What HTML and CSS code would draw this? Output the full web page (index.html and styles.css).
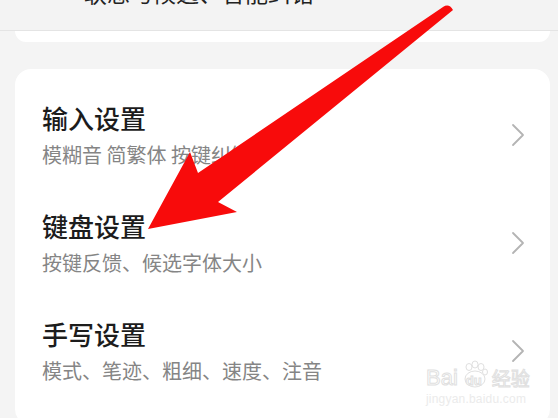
FILE: index.html
```html
<!DOCTYPE html>
<html lang="zh-CN">
<head>
  <meta charset="UTF-8" />
  <meta name="viewport" content="width=device-width, initial-scale=1.0"/>
  <title>输入法设置</title>
  <link rel="stylesheet" href="styles.css">
</head>
<body>
  <div class="page">
    <div class="top-bar">
      <div class="top-text">联想与候选、智能纠错</div>
    </div>
    <div class="card-stub"></div>

    <div class="card">
      <div class="row">
        <div class="row-text">
          <div class="row-title">输入设置</div>
          <div class="row-sub">模糊音 简繁体 按键纠错</div>
        </div>
        <svg class="chevron" width="14" height="24" viewBox="0 0 14 24">
          <polyline points="2,2 12,12 2,22" />
        </svg>
      </div>
      <div class="row">
        <div class="row-text">
          <div class="row-title">键盘设置</div>
          <div class="row-sub">按键反馈、候选字体大小</div>
        </div>
        <svg class="chevron" width="14" height="24" viewBox="0 0 14 24">
          <polyline points="2,2 12,12 2,22" />
        </svg>
      </div>
      <div class="row">
        <div class="row-text">
          <div class="row-title">手写设置</div>
          <div class="row-sub">模式、笔迹、粗细、速度、注音</div>
        </div>
        <svg class="chevron" width="14" height="24" viewBox="0 0 14 24">
          <polyline points="2,2 12,12 2,22" />
        </svg>
      </div>
    </div>

    <!-- водяной знак -->
    <div class="watermark">
      <div class="wm-line">
        <span>Bai</span>
        <span class="wm-paw">
          <svg width="30" height="30" viewBox="0 0 30 30">
            <ellipse cx="9" cy="7" rx="3" ry="3.5" />
            <ellipse cx="15" cy="4.5" rx="3" ry="3.5" />
            <ellipse cx="21" cy="7" rx="3" ry="3.5" />
            <ellipse cx="25" cy="12" rx="2.5" ry="3" />
            <ellipse cx="15" cy="19" rx="10" ry="8" />
          </svg>
          <span class="wm-du">du</span>
        </span>
        <span class="wm-cn">经验</span>
      </div>
      <div class="wm-url">jingyan.baidu.com</div>
    </div>

    <!-- красная стрелка поверх -->
    <svg class="arrow" width="558" height="418" viewBox="0 0 558 418">
      <path d="M443 7 Q449 3 453 10 L218 202 L237 212 L148 229 L190 152 L198 173 Z" />
    </svg>
  </div>
</body>
</html>
```

FILE: styles.css
```css
body {
  margin: 0;
  background-color: #f4f4f4;
  font-family: "Noto Sans CJK SC", "Noto Sans", sans-serif;
  color: #1c1c1c;
}

.page {
  position: relative;
  width: 558px;
  height: 418px;
  overflow: hidden;
}

.top-bar {
  height: 30px;
  background-color: #f3f3f3;
  border-bottom: 1px solid #e4e4e4;
  overflow: hidden;
}

.top-text {
  margin-top: -22px;
  padding-left: 84px;
  font-size: 23px;
  line-height: 28px;
  color: #222;
}

.card-stub {
  height: 11px;
  margin: 0 8px 0 15px;
  background-color: #fff;
  border-radius: 0 0 16px 16px;
}

.card {
  margin: 27px 8px 0 15px;
  padding: 12px 0 20px;
  background-color: #fff;
  border-radius: 16px;
}

.row {
  display: flex;
  align-items: center;
  justify-content: space-between;
  height: 108px;
  padding: 0 25px 0 27px;
}

.row-text {
  display: flex;
  flex-direction: column;
  gap: 9px;
}

.row-title {
  font-size: 26px;
  line-height: 30px;
  font-weight: 500;
  color: #1c1c1c;
}

.row-sub {
  font-size: 20px;
  line-height: 26px;
  color: #858585;
  white-space: nowrap;
}

.chevron {
  margin-top: 0;
}

.chevron polyline {
  fill: none;
  stroke: #b4b4b4;
  stroke-width: 1.8;
  stroke-linecap: round;
  stroke-linejoin: round;
}

.watermark {
  position: absolute;
  left: 426px;
  top: 360px;
  width: 104px;
  color: #fff;
  font-family: "Liberation Sans", sans-serif;
}

.wm-line {
  display: flex;
  align-items: flex-end;
  height: 30px;
  font-size: 22px;
  line-height: 24px;
  -webkit-text-stroke: 1px #e0e0e0;
}

.wm-paw {
  position: relative;
  width: 30px;
  height: 30px;
  margin: 0 2px;
}

.wm-paw svg {
  display: block;
}

.wm-paw ellipse {
  fill: #fff;
  stroke: #e0e0e0;
  stroke-width: 1;
}

.wm-du {
  position: absolute;
  left: 6px;
  bottom: 2px;
  font-size: 13px;
  line-height: 14px;
  font-weight: bold;
}

.wm-cn {
  font-family: "Noto Sans CJK SC", sans-serif;
  font-size: 19px;
}

.wm-url {
  margin-top: 2px;
  font-size: 12px;
  line-height: 14px;
  color: #ebebeb;
  letter-spacing: 0.2px;
}

.arrow {
  position: absolute;
  left: 0;
  top: 0;
  pointer-events: none;
}

.arrow path {
  fill: #f80b0b;
}
```
